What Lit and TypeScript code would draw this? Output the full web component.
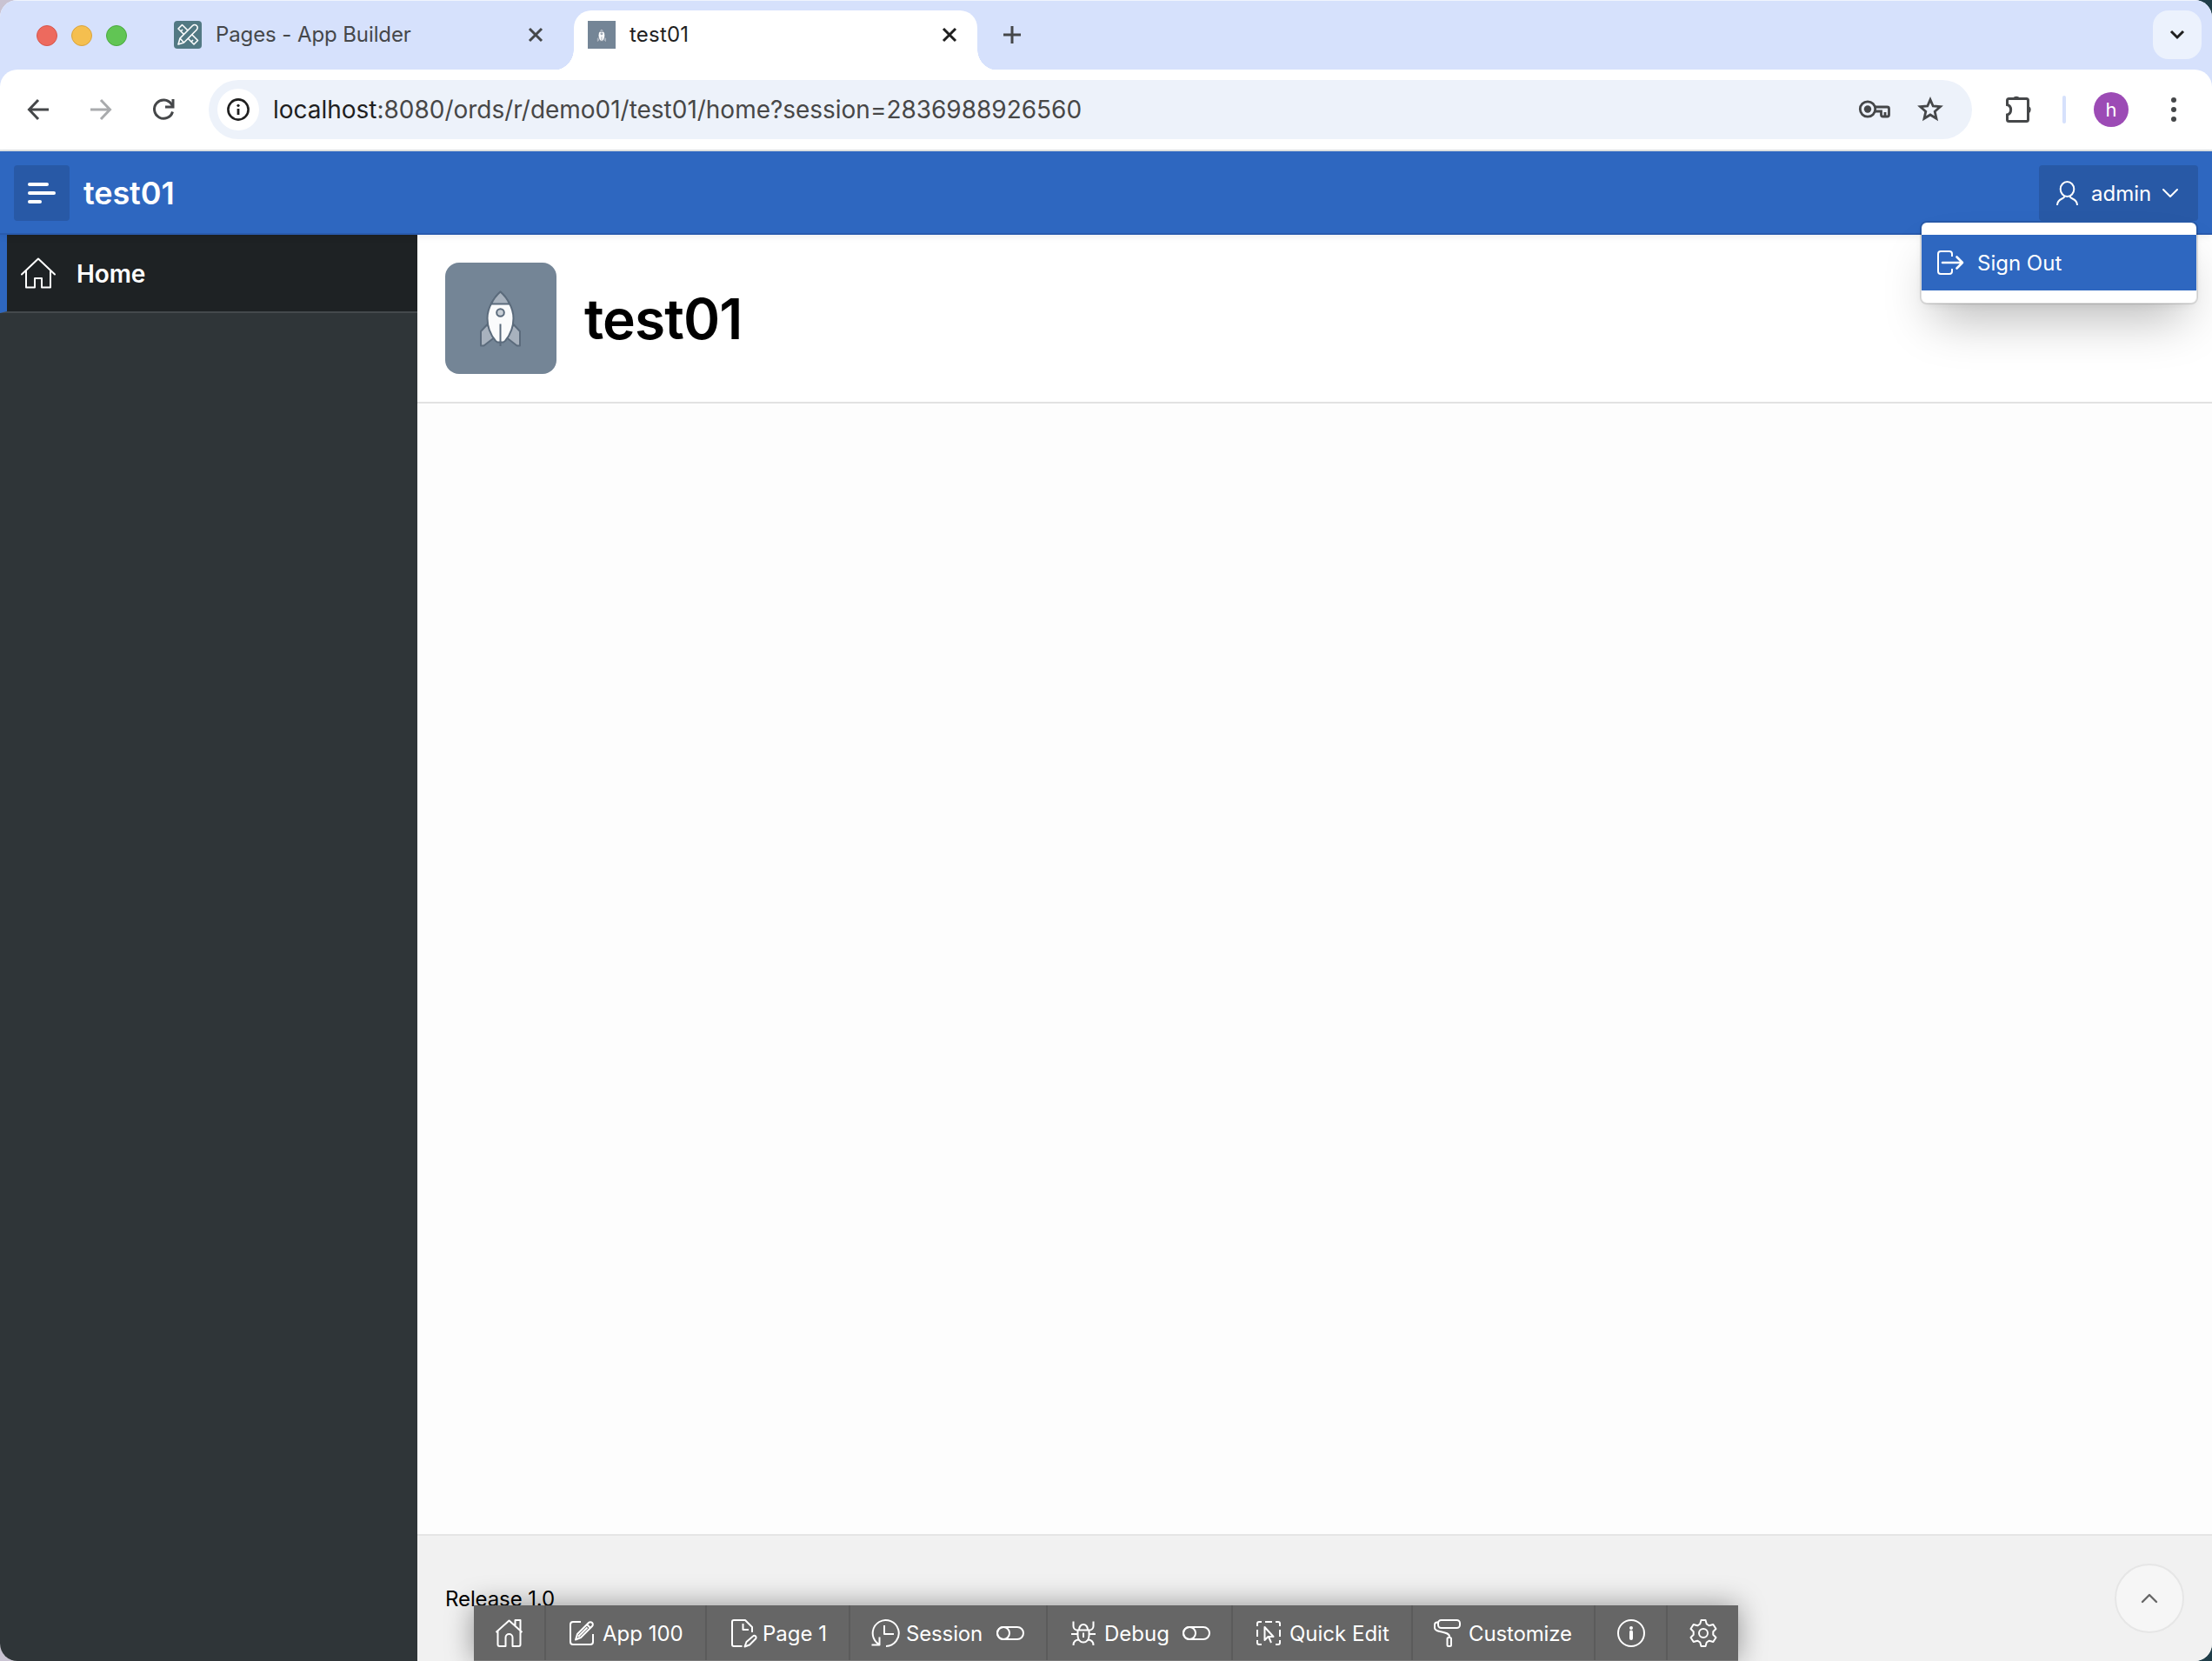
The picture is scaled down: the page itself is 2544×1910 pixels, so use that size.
import { LitElement, html, css, svg } from "lit";
import { customElement } from "lit/decorators.js";

const icon = (w: number, h: number, body: unknown, cls = "") =>
  html`<svg class="ic ${cls}" width=${w} height=${h} viewBox="0 0 ${w} ${h}" fill="none">${body}</svg>`;

const rocket = svg`
  <path d="M9.5 39 L2 47 V63.500 H5.500 L17 54.500 Z M39.500 39 L47 47 V63.500 H43.500 L32 54.500 Z" fill="#a8b2be" stroke="#5b6b7c" stroke-width="2"/>
  <path d="M24.500 1.500 C18 7 9.500 19 9.500 32 C9.500 43 14 52 19 58 L21 59.500 H28 L30 58 C35 52 39.500 43 39.500 32 C39.500 19 31 7 24.500 1.500 Z" fill="#fafbfc" stroke="#5b6b7c" stroke-width="2"/>
  <path d="M24.500 1.500 C20.500 5 16.500 10 14 15.500 H35 C32.500 10 28.500 5 24.500 1.500 Z" fill="#a8b2be" stroke="#5b6b7c" stroke-width="2"/>
  <circle cx="24.500" cy="25.500" r="4.300" fill="#c9d0d7" stroke="#5b6b7c" stroke-width="2"/>
  <path d="M24.500 38.500 V64" stroke="#5b6b7c" stroke-width="2"/>`;

const icons = {
  devHome: svg`<path d="M1.500 15 L16.500 1.500 L31.500 15 M3.500 13.500 V29 a2 2 0 0 0 2 2 H12.500 V21 a4 4 0 0 1 8 0 V31 H27.500 a2 2 0 0 0 2-2 V13.500 M23.500 7 V1 H29.500 V12.500"/>`,
  edit: svg`<path d="M15 3 H6 a3 3 0 0 0-3 3 V26 a3 3 0 0 0 3 3 H26 a3 3 0 0 0 3-3 V17 M9 23.500 L11 17 L24 4 a2.700 2.700 0 0 1 4 4 L15 21 Z M22 6 L26 10 M12 20 L22.500 9.500"/>`,
  page: svg`<path d="M13.500 31 H4 a2 2 0 0 1-2-2 V3 a2 2 0 0 1 2-2 H17 L25 9 V15 M14.500 5 V12 H21 M16.500 31.500 L18.500 26 L26 19.500 a2 2 0 0 1 3 3 L22 29.500 Z"/>`,
  session: svg`<path d="M17 31 a15 15 0 1 0-11-4.500 L9.500 29.500 M9.500 20.500 V29.500 H.5 M15 7 V17 H26"/>`,
  bug: svg`<path d="M9.500 12.500 H22.500 V19 a6.500 7.500 0 0 1-13 0 Z M11 12 a5 6 0 0 1 10 0 M16 15.500 V21 M4.500 2.500 V8 a4.500 4.500 0 0 0 5 4.500 M27.500 2.500 V8 a4.500 4.500 0 0 1-5 4.500 M2 17 H9.500 M22.500 17 H30 M11 23.500 Q4.500 23.500 4.500 30 M21 23.500 Q27.500 23.500 27.500 30"/>`,
  quick: svg`<path d="M8 3 H5 a2 2 0 0 0-2 2 V8 M24 3 H27 a2 2 0 0 1 2 2 V8 M3 24 V27 a2 2 0 0 0 2 2 H8 M29 24 V27 a2 2 0 0 1-2 2 H24 M12 3 H20 M3 12 V20 M29 12 V20"/><path d="M11.500 9 V24 L15.500 20 H21.500 Z M16 20 L19 27"/>`,
  roller: svg`<rect x="5" y="1" width="25" height="9" rx="3.500"/><path d="M5 3.500 H4 a3 3 0 0 0-3 3 V10 C1 16 18 13 18 20 V21"/><rect x="15.500" y="21" width="4.500" height="10" rx="1.500"/>`,
  info: svg`<circle cx="16" cy="16" r="15"/><path d="M16 14.500 V22" stroke-width="4" stroke-linecap="round"/><circle cx="16" cy="10" r="2" fill="#fff" stroke="none"/>`,
  gear: svg`<circle cx="16" cy="16" r="5"/><path d="M13.500 1 H18.500 L19.800 5.500 L22.800 7.300 L27.300 6 L30.500 11 L27.300 14.200 V17.800 L30.500 21 L27.300 26 L22.800 24.700 L19.800 26.500 L18.500 31 H13.500 L12.200 26.500 L9.200 24.700 L4.700 26 L1.500 21 L4.700 17.800 V14.200 L1.500 11 L4.700 6 L9.200 7.300 L12.200 5.500 Z"/>`,
  toggle: svg`<rect x="1" y="9" width="30" height="14" rx="7"/><circle cx="8" cy="16" r="7"/>`,
};

interface DevItem { cls: string; icon: unknown; label?: string; toggle?: boolean }
const devItems: DevItem[] = [
  { cls: "d-home", icon: icons.devHome },
  { cls: "d-app", icon: icons.edit, label: "App 100" },
  { cls: "d-page", icon: icons.page, label: "Page 1" },
  { cls: "d-session", icon: icons.session, label: "Session", toggle: true },
  { cls: "d-debug", icon: icons.bug, label: "Debug", toggle: true },
  { cls: "d-quick", icon: icons.quick, label: "Quick Edit" },
  { cls: "d-custom", icon: icons.roller, label: "Customize" },
  { cls: "d-info", icon: icons.info },
  { cls: "d-gear", icon: icons.gear },
];

@customElement("browser-chrome")
export class BrowserChrome extends LitElement {
  static styles = css`
    :host { display: block; background: #d6e1fc; font-family: Inter, "Liberation Sans", sans-serif; }
    .ic { display: block; flex: none; overflow: visible; }
    .strip { height: 80px; display: flex; box-sizing: border-box; border-top: 1px solid #f0f4fd; }
    .lights { display: flex; gap: 16px; padding: 28px 0 0 42px; width: 158px; box-sizing: border-box; flex: none; margin-right: 42px; }
    .light { width: 24px; height: 24px; border-radius: 50%; box-sizing: border-box; flex: none; }
    .red { background: #ed6a5e; border: 1px solid #d6564c; }
    .yellow { background: #f5bf4f; border: 1px solid #d9a33c; }
    .green { background: #61c554; border: 1px solid #4ba93f; }
    .tab { display: flex; align-items: center; box-sizing: border-box; }
    .inactive { width: 424px; height: 32px; margin-top: 23px; }
    .active { position: relative; width: 464px; height: 69px; margin: 11px 0 0 36px; padding: 0 24px 13px 16px; background: #fff; border-radius: 20px 20px 0 0; }
    .active::before, .active::after { content: ""; position: absolute; bottom: 0; width: 24px; height: 24px; }
    .active::before { right: 100%; background: radial-gradient(circle at 0 0, transparent 23.500px, #fff 24px); }
    .active::after { left: 100%; background: radial-gradient(circle at 100% 0, transparent 23.500px, #fff 24px); }
    .title { flex: 1; margin-left: 16px; font-size: 24px; line-height: 32px; color: #45474a; white-space: nowrap; letter-spacing: -0.1px; }
    .active .title { color: #1f1f1f; letter-spacing: 0.2px; }
    .plus { margin: 28px 0 0 29px; }
    .drop { width: 56px; height: 56px; border-radius: 18px; background: #ecf2fd; margin: 11px 12px 0 auto; display: grid; place-items: center; }
    .bar { height: 94px; box-sizing: border-box; background: #fff; border-bottom: 2px solid #dfe3e4; border-radius: 20px 20px 0 0; display: flex; align-items: center; padding-left: 28px; }
    .nav { display: flex; gap: 40px; width: 212px; flex: none; }
    .omni { width: 2028px; height: 68px; flex: none; border-radius: 34px; background: #edf2fa; display: flex; align-items: center; box-sizing: border-box; padding: 0 32px 0 10px; }
    .site { width: 48px; height: 48px; border-radius: 50%; background: #fff; display: grid; place-items: center; margin-right: 16px; }
    .url { flex: 1; font-size: 28px; line-height: 36px; color: #474747; white-space: nowrap; letter-spacing: -0.02px; }
    .host { color: #1f1f1f; }
    .key { margin-right: 30px; }
    .puzzle { margin-left: 35px; margin-right: 1px; }
    .sep { width: 4px; height: 32px; border-radius: 2px; background: #d6e1fc; margin: 0 32px; }
    .avatar { width: 40px; height: 40px; border-radius: 50%; background: #9c4bb5; color: #fff; font-size: 22px; display: grid; place-items: center; }
    .dots { margin-left: 48px; }
  `;
  render() {
    const close = (c: string) => icon(16, 16, svg`<path d="M1 1 L15 15 M15 1 L1 15" stroke=${c} stroke-width="3"/>`);
    return html`
      <div class="strip">
        <div class="lights"><i class="light red"></i><i class="light yellow"></i><i class="light green"></i></div>
        <div class="tab inactive">
          ${icon(32, 32, svg`<rect width="32" height="32" rx="4" fill="#527983"/><g stroke="#fff" stroke-width="1.600" stroke-linejoin="round"><path d="M5 9 L9.500 4.500 L27.500 22.500 L23 27 Z M8 12 l2-2 M20 24 l2-2"/><path d="M7 20 L21.500 5.500 a3.200 3.200 0 0 1 4.700 4.700 L11.500 25 L5 27 Z M7 20 L11.500 25" fill="#527983"/></g>`)}
          <span class="title">Pages - App Builder</span>${close("#454749")}
        </div>
        <div class="tab active">
          ${icon(32, 32, svg`<rect width="32" height="32" fill="#748596"/><g transform="translate(9.800 8.500) scale(.25)">${rocket}</g>`)}
          <span class="title">test01</span>${close("#1f1f1f")}
        </div>
        ${icon(22, 22, svg`<path d="M11 1 V21 M1 11 H21" stroke="#454749" stroke-width="3"/>`, "plus")}
        <div class="drop">${icon(18, 12, svg`<path d="M2 2 L9 9 L16 2" stroke="#1f1f1f" stroke-width="3"/>`)}</div>
      </div>
      <div class="bar">
        <div class="nav">
          ${icon(32, 32, svg`<path d="M28 16 H6 M16 5 L5.500 16 L16 27" stroke="#454749" stroke-width="3"/>`)}
          ${icon(32, 32, svg`<path d="M4 16 H26 M16 5 L26.500 16 L16 27" stroke="#a9abad" stroke-width="3"/>`)}
          ${icon(32, 32, svg`<path d="M26.500 18.500 A10.700 10.700 0 1 1 25 9.500 L26.500 11.500" stroke="#454749" stroke-width="3"/><path d="M27 4 V13 H18" stroke="#454749" stroke-width="3"/>`)}
        </div>
        <div class="omni">
          <div class="site">${icon(26, 26, svg`<circle cx="13" cy="13" r="11.600" stroke="#1f1f1f" stroke-width="2.600"/><path d="M13 12 V19" stroke="#1f1f1f" stroke-width="2.800"/><circle cx="13" cy="8.300" r="1.600" fill="#1f1f1f"/>`)}</div>
          <span class="url"><span class="host">localhost</span>:8080/ords/r/demo01/test01/home?session=2836988926560</span>
          ${icon(36, 22, svg`<circle cx="10" cy="10.500" r="8.700" stroke="#454749" stroke-width="2.800"/><circle cx="10" cy="10.500" r="4.200" fill="#454749"/><path d="M18.500 8 H32.500 a2 2 0 0 1 2 2 V17 a2 2 0 0 1-2 2 H27.500 a2 2 0 0 1-2-2 V13 H18.500 M30 14 V18" stroke="#454749" stroke-width="2.800"/>`, "key")}
          ${icon(32, 30, svg`<path d="M16 3.500 L19.200 11 L27.500 11.700 L21.200 17.200 L23 25.300 L16 21 L9 25.300 L10.800 17.200 L4.500 11.700 L12.800 11 Z" stroke="#454749" stroke-width="2.800"/>`)}
        </div>
        ${icon(36, 36, svg`<path d="M5.500 11.500 V7.500 a2 2 0 0 1 2-2 H27.500 a2 2 0 0 1 2 2 V29.500 a2 2 0 0 1-2 2 H7.500 a2 2 0 0 1-2-2 V24 C11 22.500 11 14 5.500 12.500 Z" stroke="#454749" stroke-width="3"/><path d="M12 5 a4.500 4 0 0 1 8 0 Z M30 14 a4 4.500 0 0 1 0 8.500 Z" fill="#454749"/>`, "puzzle")}
        <i class="sep"></i>
        <div class="avatar">h</div>
        ${icon(8, 28, svg`<g fill="#454749"><circle cx="4" cy="3" r="3"/><circle cx="4" cy="14" r="3"/><circle cx="4" cy="25" r="3"/></g>`, "dots")}
      </div>`;
  }
}

@customElement("app-root")
export class AppRoot extends LitElement {
  static styles = css`
    :host { display: block; width: 2544px; height: 1910px; overflow: hidden; font-family: Inter, "Liberation Sans", sans-serif; background: linear-gradient(90deg, #c9c3d2 50%, #203e49 50%); }
    .ic { display: block; flex: none; overflow: visible; stroke: #fff; stroke-width: 2; stroke-linejoin: round; }
    .window { position: relative; height: 1910px; border-radius: 20px; overflow: hidden; display: flex; flex-direction: column; background: #fdfdfd; }
    .header { height: 96px; flex: none; box-sizing: border-box; background: #2e67c0; border-bottom: 2px solid #295bae; display: flex; padding: 16px 16px 0; position: relative; z-index: 1; box-shadow: 0 2px 8px rgba(0,0,0,.07); }
    .burger { width: 64px; height: 64px; border-radius: 4px; background: #2859a6; display: flex; flex-direction: column; justify-content: center; gap: 6px; padding-left: 16px; box-sizing: border-box; }
    .line { height: 4px; border-radius: 2px; background: #fff; }
    .l1 { width: 24px; } .l2 { width: 32px; } .l3 { width: 16px; }
    .brand { margin-left: 16px; color: #fff; font-size: 36px; font-weight: 600; line-height: 64px; letter-spacing: -0.1px; }
    .user { position: relative; margin-left: auto; width: 183px; height: 64px; border-radius: 4px; background: #2859a6; display: flex; align-items: center; box-sizing: border-box; padding-left: 20px; color: #fff; font-size: 24px; }
    .admin { margin-left: 15px; width: 82px; }
    .menu { position: absolute; right: 0; top: 64px; width: 320px; height: 96px; box-sizing: border-box; border: 2px solid rgba(0,0,0,.12); background-clip: padding-box; background-color: #fff; border-radius: 8px; padding: 14px 0; box-shadow: 0 32px 56px -16px rgba(0,0,0,.28), 0 4px 12px -6px rgba(0,0,0,.12); }
    .out { height: 64px; background: #2e67c0; display: flex; align-items: center; padding-left: 16px; gap: 16px; white-space: nowrap; }
    .body { flex: 1; display: flex; min-height: 0; }
    .side { width: 480px; flex: none; background: #2f3538; }
    .home { height: 90px; box-sizing: border-box; background: #1e2224; border-left: 8px solid #2e67c0; border-bottom: 2px solid #44494c; display: flex; align-items: center; padding: 0 0 0 16px; gap: 24px; color: #fff; font-size: 28px; font-weight: 600; }
    .home span { padding-top: 1px; letter-spacing: -0.1px; }
    .main { flex: 1; display: flex; flex-direction: column; min-width: 0; }
    .hero { height: 194px; box-sizing: border-box; flex: none; background: #fff; border-bottom: 2px solid #e2e2e2; display: flex; align-items: center; padding-left: 32px; gap: 32px; }
    .logo { width: 128px; height: 128px; border-radius: 16px; background: #748596; display: grid; place-items: center; }
    .logo .ic { stroke: none; margin-right: 1px; }
    h1 { margin: 0; padding-top: 2px; font-size: 64px; font-weight: 600; line-height: 80px; letter-spacing: -0.9px; }
    .space { flex: 1; }
    .footer { height: 146px; flex: none; box-sizing: border-box; background: #f1f1f1; border-top: 2px solid #e5e5e5; display: flex; align-items: center; justify-content: space-between; padding: 0 32px; font-size: 24px; color: #000; letter-spacing: -0.1px; }
    .top { width: 80px; height: 80px; box-sizing: border-box; border: 2px solid #e6e6e6; background: #f6f6f6; border-radius: 50%; display: grid; place-items: center; }
    .top .ic { stroke: #666; stroke-width: 2.400; stroke-linecap: round; }
    .dev { position: absolute; left: 545px; bottom: 0; height: 64px; display: flex; background: #666; box-shadow: 0 0 32px rgba(0,0,0,.4); color: #fff; font-size: 24px; border-bottom: 1px solid #7c7c7c; box-sizing: border-box; }
    .item { display: flex; align-items: center; box-sizing: border-box; border-right: 2px solid #5b5b5b; white-space: nowrap; }
    .item:last-child { border-right: 0; }
    .lab { margin-left: 8px; padding-top: 2px; }
    .tg { margin-left: auto; margin-right: 25px; }
    .d-home { width: 83px; padding-left: 24px; }
    .d-app { width: 185px; padding-left: 25px; }
    .d-page { width: 165px; padding-left: 27px; }
    .d-page .lab { margin-left: 5px; }
    .d-session { width: 227px; padding-left: 24px; letter-spacing: -0.15px; }
    .d-debug { width: 213px; padding-left: 25px; }
    .d-debug .tg { margin-right: 24px; }
    .d-quick { width: 207px; padding-left: 25px; }
    .d-custom { width: 210px; padding-left: 24px; letter-spacing: -0.15px; }
    .d-info { width: 83px; padding-left: 25px; }
    .d-gear { width: 81px; padding-left: 25px; }
  `;
  render() {
    return html`
      <div class="window">
        <browser-chrome></browser-chrome>
        <header class="header">
          <div class="burger"><i class="line l1"></i><i class="line l2"></i><i class="line l3"></i></div>
          <span class="brand">test01</span>
          <div class="user">
            ${icon(25, 28, svg`<ellipse cx="12.500" cy="9.500" rx="7.800" ry="8.500"/><path d="M9.500 17.500 C9.500 21.500 1 19.500 1 28 M15.500 17.500 C15.500 21.500 24 19.500 24 28"/>`)}
            <span class="admin">admin</span>
            ${icon(18, 10, svg`<path d="M1 1 L9 9 L17 1" stroke-linecap="round"/>`)}
            <div class="menu">
              <div class="out">
                ${icon(32, 32, svg`<path d="M19 9 V6 a3 3 0 0 0-3-3 H6 a3 3 0 0 0-3 3 V26 a3 3 0 0 0 3 3 H16 a3 3 0 0 0 3-3 V23"/><path d="M8 16 H31 M24.500 9.500 L31 16 L24.500 22.500" stroke-width="2.600" stroke-linecap="round"/>`)}
                <span>Sign Out</span>
              </div>
            </div>
          </div>
        </header>
        <div class="body">
          <nav class="side">
            <div class="home">
              ${icon(40, 36, svg`<path d="M1 19.500 L20 1.500 L39 19.500 M6 15.500 V34.500 H16 V24 H24 V34.500 H34 V15.500" stroke-linecap="round"/>`)}
              <span>Home</span>
            </div>
          </nav>
          <main class="main">
            <section class="hero">
              <div class="logo">${icon(49, 65, rocket)}</div>
              <h1>test01</h1>
            </section>
            <div class="space"></div>
            <footer class="footer">
              <span>Release 1.0</span>
              <div class="top">${icon(18, 10, svg`<path d="M1 9 L9 1 L17 9"/>`)}</div>
            </footer>
          </main>
        </div>
        <div class="dev">
          ${devItems.map((d) => html`<div class="item ${d.cls}">${icon(32, 32, d.icon)}${d.label ? html`<span class="lab">${d.label}</span>` : ""}${d.toggle ? icon(32, 32, icons.toggle, "tg") : ""}</div>`)}
        </div>
      </div>`;
  }
}
